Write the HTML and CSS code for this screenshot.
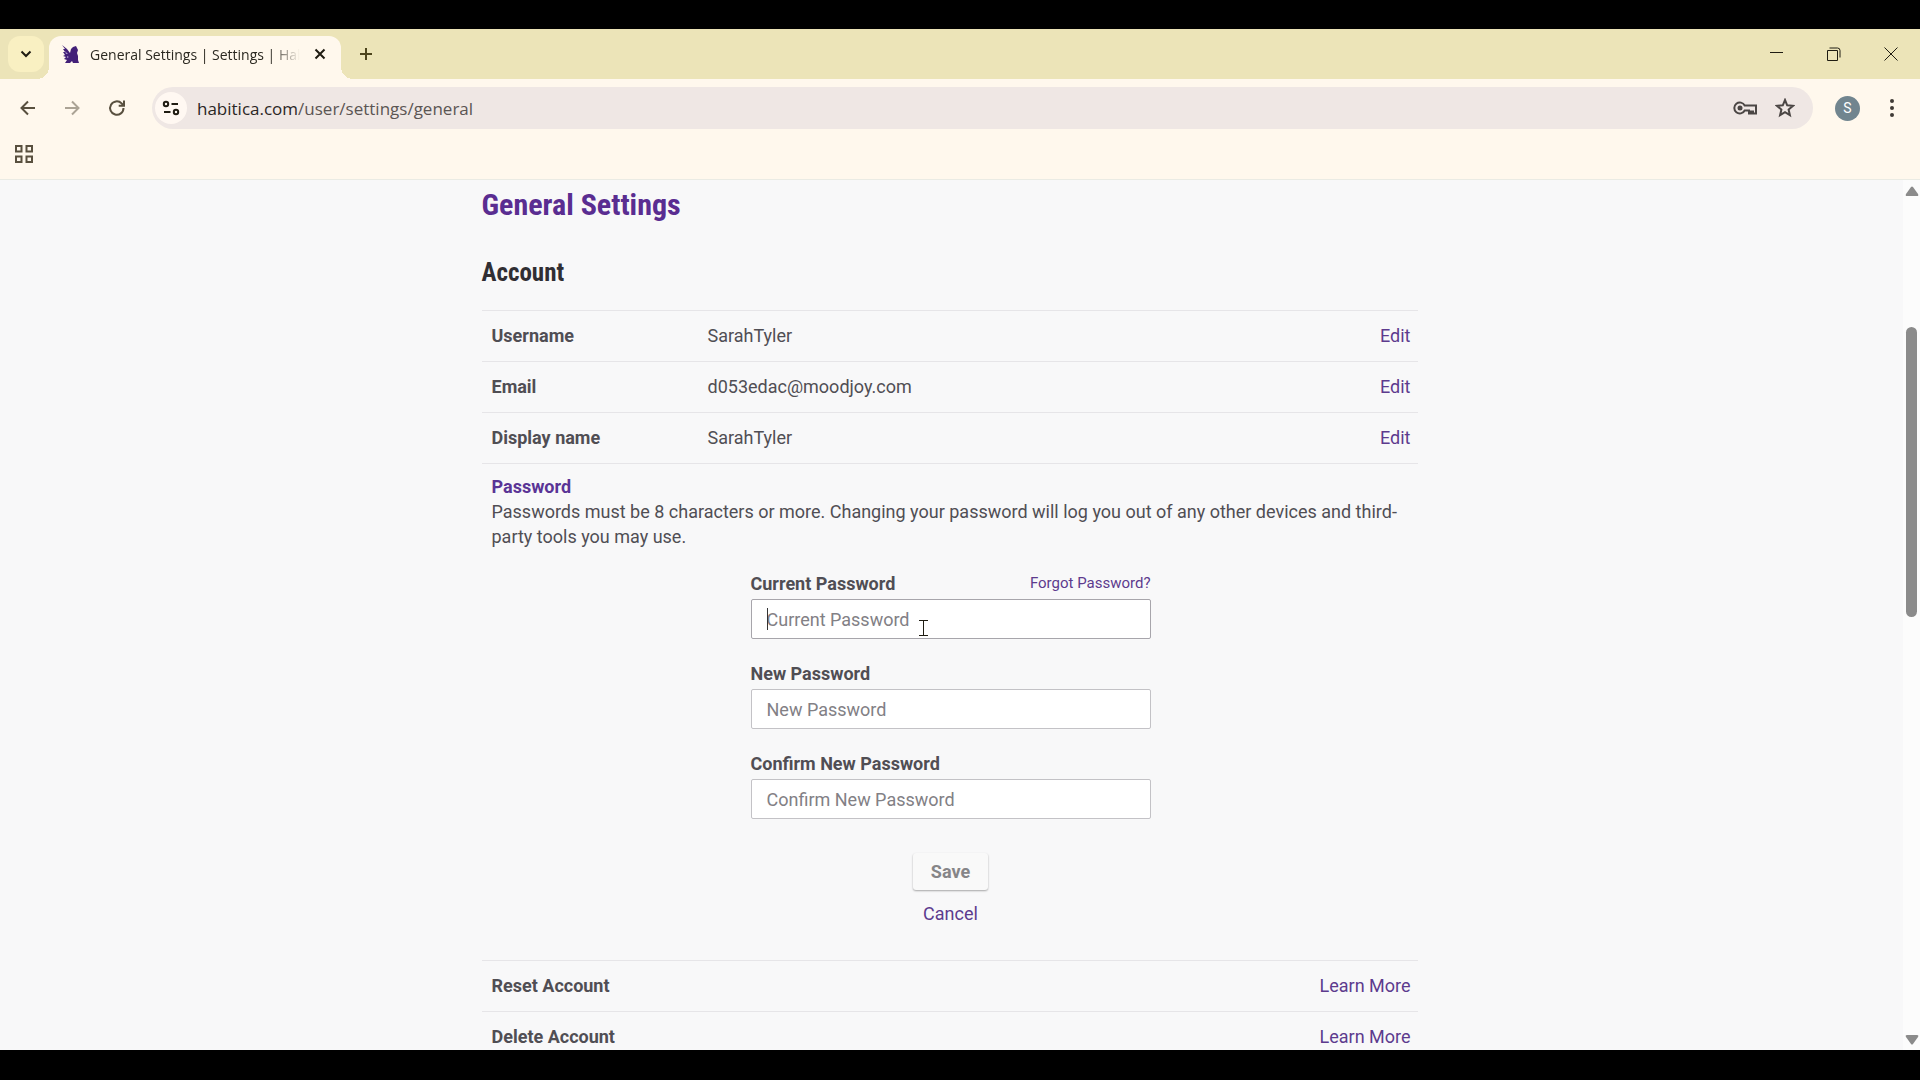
FILE: index.html
```html
<!DOCTYPE html>
<html lang="en">
<head>
<meta charset="utf-8">
<title>General Settings | Settings | Habitica</title>
<link rel="stylesheet" href="styles.css">
</head>
<body>
<div class="browser">
  <header class="tab-strip">
    <button class="tab-search" aria-label="Search tabs"><svg width="12" height="8" viewBox="0 0 12 8"><path d="M1.500 1.500 6 6l4.500-4.500" class="stroke heavy"/></svg></button>
    <div class="tab">
      <svg class="favicon" width="18" height="18" viewBox="0 0 18 18"><path fill="#432078" d="M0 0l5 4 3 4 1-4 2-2 3-1 1 2 1 2-1 3 1 3v4l1 3H11l-1-2-2 2H3l2-3-3-1 2-2-3-1 2-1-2-3 2 0-2-3 2 0z"/><path fill="#a58fc4" d="M3 6l3 3H4zM5 11l2 1-2 1z"/></svg>
      <span class="tab-title">General Settings | Settings | Hab</span>
      <button class="tab-close" aria-label="Close tab"><svg width="12" height="12" viewBox="0 0 12 12"><path d="M1.500 1.500l9 9M10.500 1.500l-9 9" class="stroke heavy"/></svg></button>
    </div>
    <button class="new-tab" aria-label="New tab"><svg width="14" height="14" viewBox="0 0 14 14"><path d="M7 1v12M1 7h12" class="stroke olive"/></svg></button>
    <div class="window-controls">
      <button aria-label="Minimize"><svg width="14" height="14" viewBox="0 0 14 14"><path d="M0 5.500h13" class="stroke thin"/></svg></button>
      <button aria-label="Restore"><svg width="14" height="14" viewBox="0 0 14 14"><path d="M.5 3.500h10v10h-10zM2.500 1h8q2.500 0 2.500 2.500v7" class="stroke thin"/></svg></button>
      <button aria-label="Close"><svg width="14" height="14" viewBox="0 0 14 14"><path d="M.5.5l13 13M13.500.5l-13 13" class="stroke thin"/></svg></button>
    </div>
  </header>
  <nav class="toolbar">
    <button class="nav-button" aria-label="Back"><svg width="16" height="16" viewBox="0 0 16 16"><path d="M15 8H2M8 1.500 1.500 8 8 14.500" class="stroke brown"/></svg></button>
    <button class="nav-button faded" aria-label="Forward"><svg width="16" height="16" viewBox="0 0 16 16"><path d="M1 8h13M8 1.500 14.500 8 8 14.500" class="stroke brown"/></svg></button>
    <button class="nav-button" aria-label="Reload"><svg width="18" height="18" viewBox="0 0 18 18"><path d="M16.500 9A6.700 6.700 0 1 1 14.600 4.400L17 6.800M17 1.500v5.300h-5.300" class="stroke brown"/></svg></button>
    <div class="address">
      <button class="site-info" aria-label="View site information"><svg width="18" height="16" viewBox="0 0 18 16"><g class="stroke heavy"><circle cx="4" cy="4" r="2.200"/><path d="M9.500 4H16M2 12h6.500"/><circle cx="14" cy="12" r="2.200"/></g></svg></button>
      <span class="url">habitica.com<span class="url-path">/user/settings/general</span></span>
      <button class="address-action" aria-label="Manage passwords"><svg width="24" height="16" viewBox="0 0 24 16"><circle cx="7" cy="8" r="2.500" fill="#4b4644"/><path d="M11.700 5.500A5.500 5.500 0 1 0 11.700 10.500H16v3h2v-2h2v2h3V5.500z" class="stroke grey"/></svg></button>
      <button class="address-action" aria-label="Bookmark this tab"><svg width="20" height="20" viewBox="0 0 20 20"><path d="M10 2l2.200 5.300 5.800.5-4.400 3.800 1.300 5.600L10 14.200l-4.900 3 1.300-5.600L2 7.800l5.800-.5z" class="stroke grey"/></svg></button>
    </div>
    <button class="avatar" aria-label="Profile">S</button>
    <button class="menu" aria-label="Browser menu"><svg width="6" height="18" viewBox="0 0 6 18"><g fill="#403b36"><circle cx="3" cy="2" r="2"/><circle cx="3" cy="9" r="2"/><circle cx="3" cy="16" r="2"/></g></svg></button>
  </nav>
  <div class="bookmarks">
    <button aria-label="Apps"><svg width="18" height="18" viewBox="0 0 18 18"><path d="M1 1h5.500v5.500H1zM11.500 1H17v5.500h-5.500zM1 11.500h5.500V17H1zM11.500 11.500H17V17h-5.500z" class="stroke brown"/></svg></button>
  </div>
  <div class="viewport">
    <main class="page">
      <div class="settings">
        <h1>General Settings</h1>
        <h2>Account</h2>
        <table>
          <tbody>
            <tr><th scope="row">Username</th><td>SarahTyler</td><td class="action"><a href="#username">Edit</a></td></tr>
            <tr><th scope="row">Email</th><td>d053edac@moodjoy.com</td><td class="action"><a href="#email">Edit</a></td></tr>
            <tr><th scope="row">Display name</th><td>SarahTyler</td><td class="action"><a href="#display-name">Edit</a></td></tr>
            <tr>
              <td colspan="3" class="expanded">
                <h3>Password</h3>
                <p>Passwords must be 8 characters or more. Changing your password will log you out of any other devices and third-party tools you may use.</p>
                <form class="password-form">
                  <div class="field">
                    <div class="field-head"><label for="current">Current Password</label><a class="forgot" href="#forgot">Forgot Password?</a></div>
                    <div class="input-wrap">
                      <input class="active" id="current" type="password" placeholder="Current Password">
                      <span class="caret"></span>
                      <svg class="pointer" width="10" height="18" viewBox="0 0 10 18"><path d="M0 1.500h9M0 16.500h9M4.500 2v14" class="stroke thin"/></svg>
                    </div>
                  </div>
                  <div class="field">
                    <label for="new">New Password</label>
                    <input id="new" type="password" placeholder="New Password">
                  </div>
                  <div class="field">
                    <label for="confirm">Confirm New Password</label>
                    <input id="confirm" type="password" placeholder="Confirm New Password">
                  </div>
                  <div class="buttons">
                    <button class="save" type="submit" disabled>Save</button>
                    <a href="#cancel">Cancel</a>
                  </div>
                </form>
              </td>
            </tr>
            <tr><th scope="row">Reset Account</th><td></td><td class="action"><a href="#reset">Learn More</a></td></tr>
            <tr><th scope="row">Delete Account</th><td></td><td class="action"><a href="#delete">Learn More</a></td></tr>
          </tbody>
        </table>
      </div>
    </main>
    <div class="scrollbar">
      <svg width="14" height="10" viewBox="0 0 14 10"><path d="M6 1Q7 0 8 1l5 7q1 2-1 2H2Q0 10 1 8z" fill="#8b8b8b"/></svg>
      <div class="track"><div class="thumb"></div></div>
      <svg width="14" height="10" viewBox="0 0 14 10"><path d="M6 9q1 1 2 0l5-7q1-2-1-2H2Q0 0 1 2z" fill="#8b8b8b"/></svg>
    </div>
  </div>
</div>
</body>
</html>
```
FILE: styles.css
```css
* { box-sizing: border-box; }

body {
  margin: 0;
  background: #000;
  font-family: Roboto, sans-serif;
  color: #504e54;
}

button {
  display: flex;
  align-items: center;
  justify-content: center;
  padding: 0;
  border: 0;
  background: none;
  font: inherit;
}

a { color: #5d3b8e; text-decoration: none; }

.stroke { fill: none; stroke: #1f1c12; stroke-width: 2; }
.heavy { stroke-width: 2; }
.thin { stroke-width: 1; }
.olive { stroke: #4d441c; }
.brown { stroke: #59503f; }
.grey { stroke: #4b4644; }

.browser {
  display: flex;
  flex-direction: column;
  height: 100vh;
  padding: 29px 0 30px;
}

/* Tab strip */
.tab-strip {
  display: flex;
  height: 50px;
  padding: 0 1px 0 8px;
  background: #ece4b8;
}

.tab-search {
  width: 36px;
  height: 36px;
  margin: 7px 5px 0 0;
  border-radius: 12px;
  background: #f9f0c2;
}

.tab {
  position: relative;
  display: flex;
  align-items: center;
  width: 292px;
  height: 43px;
  margin-top: 7px;
  padding: 0 13px 7px;
  border-radius: 12px 12px 0 0;
  background: #fff8ed;
}

.tab::before,
.tab::after {
  content: "";
  position: absolute;
  bottom: 0;
  width: 12px;
  height: 12px;
}

.tab::before { right: 100%; background: radial-gradient(circle at 0 0, transparent 12px, #fff8ed 12px); }
.tab::after { left: 100%; background: radial-gradient(circle at 100% 0, transparent 12px, #fff8ed 12px); }

.tab-title {
  flex: 1;
  margin: 0 6px 0 10px;
  overflow: hidden;
  white-space: nowrap;
  font: 14px "Open Sans", sans-serif;
  color: #2b2820;
  mask-image: linear-gradient(to right, #000 180px, transparent 210px);
}

.tab-close { width: 16px; }
.new-tab { width: 30px; height: 50px; margin-left: 10px; }
.window-controls { display: flex; margin-left: auto; }
.window-controls button { width: 57px; height: 50px; }

/* Toolbar */
.toolbar {
  display: flex;
  align-items: center;
  height: 58px;
  padding: 0 18px 0 8px;
  background: #fff8ed;
}

.nav-button { width: 40px; height: 40px; margin-right: 4px; }
.faded { opacity: 0.5; }

.address {
  display: flex;
  flex: 1;
  align-items: center;
  height: 42px;
  margin: 0 22px 0 12px;
  padding: 0 16px 0 3px;
  border-radius: 21px;
  background: #efe7e4;
}

.site-info { width: 32px; height: 32px; border-radius: 50%; background: #fff8f2; }
.url { flex: 1; margin-left: 10px; font: 17px "Open Sans", sans-serif; color: #2a2624; }
.url-path { color: #5b5553; }
.address-action { width: 24px; margin-left: 16px; }

.avatar {
  width: 25px;
  height: 25px;
  border-radius: 50%;
  background: #71858f;
  color: #fff;
  font-size: 14px;
}

.menu { width: 20px; margin-left: 22px; }

.bookmarks {
  display: flex;
  height: 43px;
  padding: 0 15px 8px;
  border-bottom: 1px solid #eaebe4;
  background: #fff8ed;
}

/* Page */
.viewport { display: flex; flex: 1; min-height: 0; background: #f8f8f9; }

.page { flex: 1; overflow: hidden; padding: 5px 4px 0 0; }

.settings { max-width: 936px; margin: 0 auto; font-size: 18px; line-height: 25px; }

h1, h2, h3, p { margin: 0; }

h1, h2 { font-family: "Roboto Condensed", "Liberation Sans Narrow", Roboto, sans-serif; font-weight: 700; }
h1 { font-size: 30px; line-height: 40px; color: #5a2d91; }
h2 { margin: 32px 0 21px; font-size: 25px; line-height: 32px; color: #302e33; }

table { width: 100%; border-collapse: collapse; table-layout: fixed; }
tr { border-top: 1px solid #e6e5e8; }
th, td { padding: 12px 7px 13px 10px; text-align: left; }
th { width: 216px; padding-right: 0; font-weight: 700; }
.action { text-align: right; }
.expanded { padding: 10px 8px 34px 10px; }

h3 { font-size: 18px; line-height: 25px; color: #5a3496; }

.password-form {
  display: flex;
  flex-direction: column;
  gap: 22px;
  max-width: 400px;
  margin: 22px auto 0;
}

.field { display: flex; flex-direction: column; gap: 3px; }
.field-head { display: flex; justify-content: space-between; }
label { font-weight: 700; }
.forgot { font-size: 15px; line-height: 24px; }
.input-wrap { position: relative; display: flex; }

input {
  width: 100%;
  height: 40px;
  padding: 0 15px;
  border: 1px solid #c3c2c6;
  border-radius: 2px;
  background: #fff;
  font: 18px Roboto, sans-serif;
}

input::placeholder { color: #828085; opacity: 1; }
input.active { border-color: #a7a5ab; }

.caret { position: absolute; left: 16px; top: 9px; width: 1px; height: 22px; background: #333; }
.pointer { position: absolute; left: 168px; top: 20px; }

.buttons { display: flex; flex-direction: column; align-items: center; gap: 11px; padding-top: 12px; }

.save {
  padding: 6px 18px;
  border-radius: 3px;
  background: #f9f9f9;
  box-shadow: 0 1px 2px #00000055;
  color: #868588;
  font-weight: 700;
}

.scrollbar {
  display: flex;
  flex-direction: column;
  align-items: center;
  width: 17px;
  padding: 6px 0 5px;
  background: #fcfcfc;
}

.track { flex: 1; padding-top: 131px; }
.thumb { width: 11px; height: 41%; min-height: 40px; border-radius: 6px; background: #8b8b8b; }
```
